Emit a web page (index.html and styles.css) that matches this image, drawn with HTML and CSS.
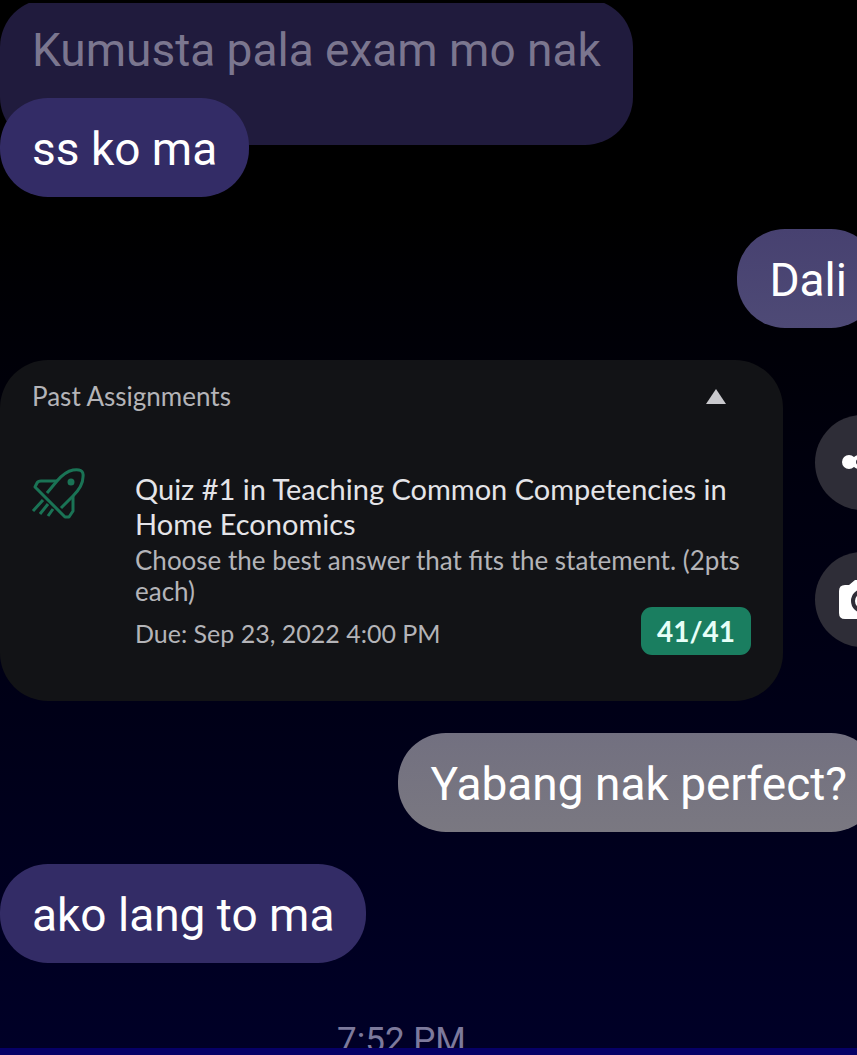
FILE: index.html
```html
<!DOCTYPE html>
<html lang="fil">
<head>
<meta charset="utf-8">
<meta name="viewport" content="width=device-width, initial-scale=1">
<title>Chat</title>
<link rel="stylesheet" href="styles.css">
</head>
<body>

<main class="chat">
  <p class="bubble quoted">Kumusta pala exam mo nak</p>
  <p class="bubble theirs reply">ss ko ma</p>
  <p class="bubble mine">Dali</p>

  <div class="photo-row">
    <section class="card">
      <button class="card-head" type="button" aria-expanded="true">
        <span>Past Assignments</span>
        <svg width="20" height="15" viewBox="0 0 20 15" aria-hidden="true"><path d="M10 0L20 15H0z" fill="#c9c9cd"/></svg>
      </button>
      <div class="item">
        <svg class="rocket" width="54" height="50" viewBox="0 0 54 50" aria-hidden="true">
          <path d="M15 24L25 12C31 5 36 2 41 1C47 0 52 1 51 8C51 15 47 21 41 27L29 39"/>
          <path d="M25 12H9Q6 12 5 14L3 18L33 48H37L41 42V27"/>
          <path d="M11 31L1 42M16 35L8 45M21 40L16 47"/>
          <circle cx="39" cy="13" r="2" fill="#1a7355"/>
        </svg>
        <div class="info">
          <h2>Quiz #1 in Teaching Common Competencies in Home Economics</h2>
          <p class="desc">Choose the best answer that fits the statement. (2pts each)</p>
          <div class="due">
            <span class="date">Due: Sep 23, 2022 4:00 PM</span>
            <span class="score">41/41</span>
          </div>
        </div>
      </div>
    </section>
    <div class="actions">
      <button type="button" aria-label="Share">
        <svg width="44" height="44" viewBox="0 0 44 44" aria-hidden="true">
          <path d="M17 22L34 9M17 22L34 35" stroke="#fff" stroke-width="5"/>
          <g fill="#fff"><circle cx="8" cy="22" r="7"/><circle cx="18" cy="22" r="7"/><circle cx="34" cy="9" r="7"/><circle cx="34" cy="35" r="7"/></g>
          <circle cx="18" cy="22" r="3" fill="#2e2d37"/>
        </svg>
      </button>
      <button type="button" aria-label="Camera">
        <svg width="48" height="44" viewBox="0 0 48 44" aria-hidden="true">
          <path d="M6 8H10L16 3H32L38 8H42Q48 8 48 14V36Q48 42 42 42H6Q0 42 0 36V14Q0 8 6 8z" fill="#fff"/>
          <circle cx="24" cy="24" r="10" fill="none" stroke="#2e2d37" stroke-width="4"/>
        </svg>
      </button>
    </div>
  </div>

  <p class="bubble mine grey">Yabang nak perfect?</p>
  <p class="bubble theirs">ako lang to ma</p>
  <time class="stamp" datetime="19:52">7:52 PM</time>
</main>
<footer class="bottom-bar"></footer>

</body>
</html>
```
FILE: styles.css
```css
* { box-sizing: border-box; }

body {
  margin: 0;
  height: 100vh;
  padding-top: 3px;
  display: flex;
  flex-direction: column;
  overflow: hidden;
  background: #000;
  font-family: Roboto, sans-serif;
}

h2, p { margin: 0; }

button {
  border: 0;
  padding: 0;
  font: inherit;
  color: inherit;
}

/* conversation */
.chat {
  flex: 1;
  min-height: 0;
  overflow: hidden;
  display: flex;
  flex-direction: column;
  align-items: flex-start;
  background: linear-gradient(#000 20%, #00000e 45%, #000018 70%, #000027);
}

.bubble {
  flex: none;
  margin-bottom: 32px;
  padding: 24px 32px 20px;
  border-radius: 48px;
  font-size: 46px;
  line-height: 55px;
  color: #fff;
}

.theirs { background: #332c66; }

.quoted {
  margin-top: -4px;
  margin-bottom: 0;
  padding-bottom: 67px;
  background: #201b3d;
  color: #7b768f;
}

/* the reply sits over the quoted message */
.reply { margin-top: -47px; }

.mine {
  align-self: flex-end;
  margin-right: -22px;
  background: linear-gradient(#474170, #4e4a76);
}

.grey { background: linear-gradient(#727080, #7a7881); }

/* picture with the quick actions */
.photo-row {
  flex: none;
  align-self: stretch;
  display: flex;
  align-items: center;
  gap: 32px;
  margin: 0 -53px 32px 0;
}

.card {
  flex: 1;
  padding: 21px 32px 46px;
  border-radius: 48px;
  background: #121316;
  color: #b4b4b8;
  font-family: Lato, sans-serif;
  font-size: 26px;
  line-height: 31px;
}

.card-head {
  width: 100%;
  display: flex;
  justify-content: space-between;
  align-items: center;
  padding-right: 25px;
  background: none;
}

.item {
  display: flex;
  gap: 49px;
  margin-top: 59px;
}

.rocket {
  flex: none;
  margin-top: -2px;
  overflow: visible;
  fill: none;
  stroke: #1a7355;
  stroke-width: 3;
  stroke-linejoin: round;
}

.info { flex: 1; }

.info h2 {
  font-size: 29px;
  line-height: 35px;
  font-weight: 400;
  color: #e4e4e8;
}

.desc { margin-top: 4px; }

.due {
  display: flex;
  justify-content: space-between;
  align-items: center;
}

.date {
  padding-top: 4px;
  font-size: 25px;
}

.score {
  padding: 0 16px;
  border-radius: 11px;
  background: #1a7e60;
  color: #e6fff8;
  font-size: 28px;
  line-height: 48px;
  font-weight: 700;
}

.actions {
  flex: none;
  display: flex;
  flex-direction: column;
  gap: 42px;
}

.actions button {
  width: 95px;
  height: 95px;
  border-radius: 50%;
  display: flex;
  align-items: center;
  justify-content: center;
  background: #2e2d37;
}

.stamp {
  flex: none;
  align-self: center;
  margin: 25px 54px 0 0;
  font-size: 35px;
  line-height: 41px;
  color: #7d7a9c;
}

.bottom-bar {
  flex: none;
  height: 7px;
  background: #060066;
}
```
